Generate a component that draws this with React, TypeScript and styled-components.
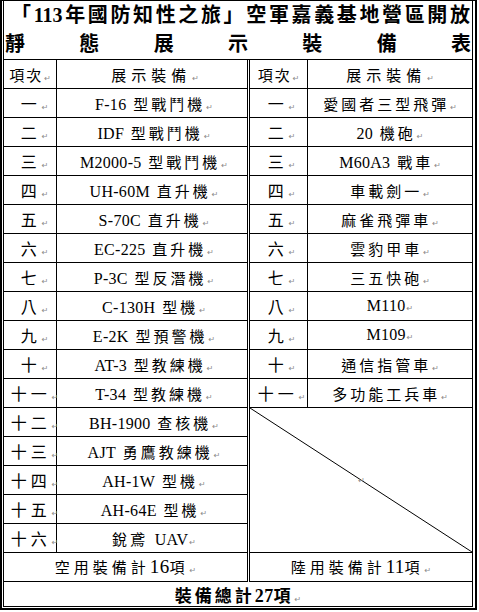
import React from 'react';
import styled, { createGlobalStyle } from 'styled-components';

const GlobalStyle = createGlobalStyle`
  html, body {
    margin: 0;
    background: #fff;
  }
  body {
    font-family: 'Liberation Serif', 'Noto Sans CJK TC', serif;
    color: #000;
  }
`;

const airItems = [
  ['一', 'F-16 型戰鬥機'],
  ['二', 'IDF 型戰鬥機'],
  ['三', 'M2000-5 型戰鬥機'],
  ['四', 'UH-60M 直升機'],
  ['五', 'S-70C 直升機'],
  ['六', 'EC-225 直升機'],
  ['七', 'P-3C 型反潛機'],
  ['八', 'C-130H 型機'],
  ['九', 'E-2K 型預警機'],
  ['十', 'AT-3 型教練機'],
  ['十一', 'T-34 型教練機'],
  ['十二', 'BH-1900 查核機'],
  ['十三', 'AJT 勇鷹教練機'],
  ['十四', 'AH-1W 型機'],
  ['十五', 'AH-64E 型機'],
  ['十六', '銳鳶 UAV'],
];

const landItems = [
  ['一', '愛國者三型飛彈'],
  ['二', '20 機砲'],
  ['三', 'M60A3 戰車'],
  ['四', '車載劍一'],
  ['五', '麻雀飛彈車'],
  ['六', '雲豹甲車'],
  ['七', '三五快砲'],
  ['八', 'M110'],
  ['九', 'M109'],
  ['十', '通信指管車'],
  ['十一', '多功能工兵車'],
];

// outer double frame: thick outside, thin inside
const Frame = styled.div`
  width: 470px;
  border-style: solid;
  border-color: #000;
  border-width: 1px 2px 2px 2px;
  padding: 0 2px 1px 1px;
`;

const Inner = styled.div`
  width: 468px;
  border: 1px solid #000;
  border-top: none;
`;

const TitleBlock = styled.div`
  height: 58px;
  display: flex;
  flex-direction: column;
`;

const TitleLine = styled.div<{ $padL: number; $padR: number }>`
  height: 29px;
  line-height: 29px;
  font-size: 20px;
  font-weight: 700;
  text-align: justify;
  text-align-last: justify;
  padding: 0 ${p => p.$padR}px 0 ${p => p.$padL}px;
  overflow: hidden;
`;

const Board = styled.div`
  display: flex;
  border-top: 1px solid #000;
`;

const Panel = styled.div<{ $cols: string; $split?: boolean }>`
  display: grid;
  grid-template-columns: ${p => p.$cols};
  grid-auto-rows: 29px;
  border-right: ${p => (p.$split ? '3px double #000' : 'none')};
`;

const Cell = styled.div<{ $rule?: boolean; $wide?: boolean; $track?: number; $size?: number; $shift?: number }>`
  display: flex;
  align-items: center;
  justify-content: center;
  box-sizing: border-box;
  border-bottom: 1px solid #000;
  border-right: ${p => (p.$rule ? '1px solid #000' : '0')};
  grid-column: ${p => (p.$wide ? 'span 2' : 'auto')};
  padding-left: ${p => p.$shift ?? 0}px;
  font-size: ${p => p.$size ?? 15}px;
  letter-spacing: ${p => p.$track ?? 3}px;
  white-space: nowrap;
`;

const Text = styled.span`
  white-space: pre;
`;

const EmptyCell = styled.div`
  position: relative;
  grid-column: span 2;
  grid-row: span 5;
  box-sizing: border-box;
  border-bottom: 1px solid #000;
  display: flex;
  align-items: center;
  justify-content: center;
`;

const Slash = styled.svg`
  position: absolute;
  inset: 0;
  width: 100%;
  height: 100%;
`;

const TotalRow = styled.div`
  height: 24px;
  display: flex;
  align-items: center;
  justify-content: center;
  font-size: 17px;
  font-weight: 700;
  letter-spacing: 3px;
`;

const Latin = styled.span<{ $size?: number }>`
  font-size: ${p => p.$size ?? 16}px;
  letter-spacing: 0.3px;
`;

const Mark = styled.span`
  font-family: 'DejaVu Sans', sans-serif;
  font-size: 8px;
  font-weight: 400;
  color: #8a8a8a;
  letter-spacing: 0;
  margin-left: 1px;
  position: relative;
  z-index: 1;
`;

const renderText = (text: string, digitSize?: number) =>
  text.split(/([A-Za-z0-9-]+)/).map((part, i) =>
    i % 2 ? (
      <Latin key={i} $size={digitSize}>
        {part}
      </Latin>
    ) : (
      part
    )
  );

const Label = ({ text, digitSize }: { text: string; digitSize?: number }) => (
  <Text>
    {renderText(text, digitSize)}
    <Mark>↵</Mark>
  </Text>
);

export default function App() {
  return (
    <>
      <GlobalStyle />
      <Frame>
        <Inner>
          <TitleBlock>
            <TitleLine $padL={7} $padR={2}>「113年國防知性之旅」空軍嘉義基地營區開放</TitleLine>
            <TitleLine $padL={1} $padR={1}>靜態展示裝備表</TitleLine>
          </TitleBlock>

          <Board>
            <Panel $cols="53px 190px" $split>
              <Cell $rule $track={2}>
                <Label text="項次" />
              </Cell>
              <Cell $track={5} $shift={6}>
                <Label text="展示裝備" />
              </Cell>
              {airItems.map(([no, name]) => (
                <React.Fragment key={no}>
                  <Cell $rule $track={4} $size={16} $shift={9}>
                    <Label text={no} />
                  </Cell>
                  <Cell $shift={4}>
                    <Label text={name} />
                  </Cell>
                </React.Fragment>
              ))}
              <Cell $wide $track={4}>
                <Label text="空用裝備計16項" digitSize={19} />
              </Cell>
            </Panel>

            <Panel $cols="58px 164px">
              <Cell $rule $track={2}>
                <Label text="項次" />
              </Cell>
              <Cell $track={5}>
                <Label text="展示裝備" />
              </Cell>
              {landItems.map(([no, name]) => (
                <React.Fragment key={no}>
                  <Cell $rule $track={4} $size={16} $shift={6}>
                    <Label text={no} />
                  </Cell>
                  <Cell>
                    <Label text={name} />
                  </Cell>
                </React.Fragment>
              ))}
              <EmptyCell>
                <Slash viewBox="0 0 222 144" preserveAspectRatio="none">
                  <line x1="0" y1="0" x2="222" y2="144" stroke="#000" strokeWidth="1" vectorEffect="non-scaling-stroke" />
                </Slash>
                <Mark>↵</Mark>
              </EmptyCell>
              <Cell $wide $track={4}>
                <Label text="陸用裝備計11項" digitSize={19} />
              </Cell>
            </Panel>
          </Board>

          <TotalRow>
            <Label text="裝備總計27項" digitSize={18} />
          </TotalRow>
        </Inner>
      </Frame>
    </>
  );
}
